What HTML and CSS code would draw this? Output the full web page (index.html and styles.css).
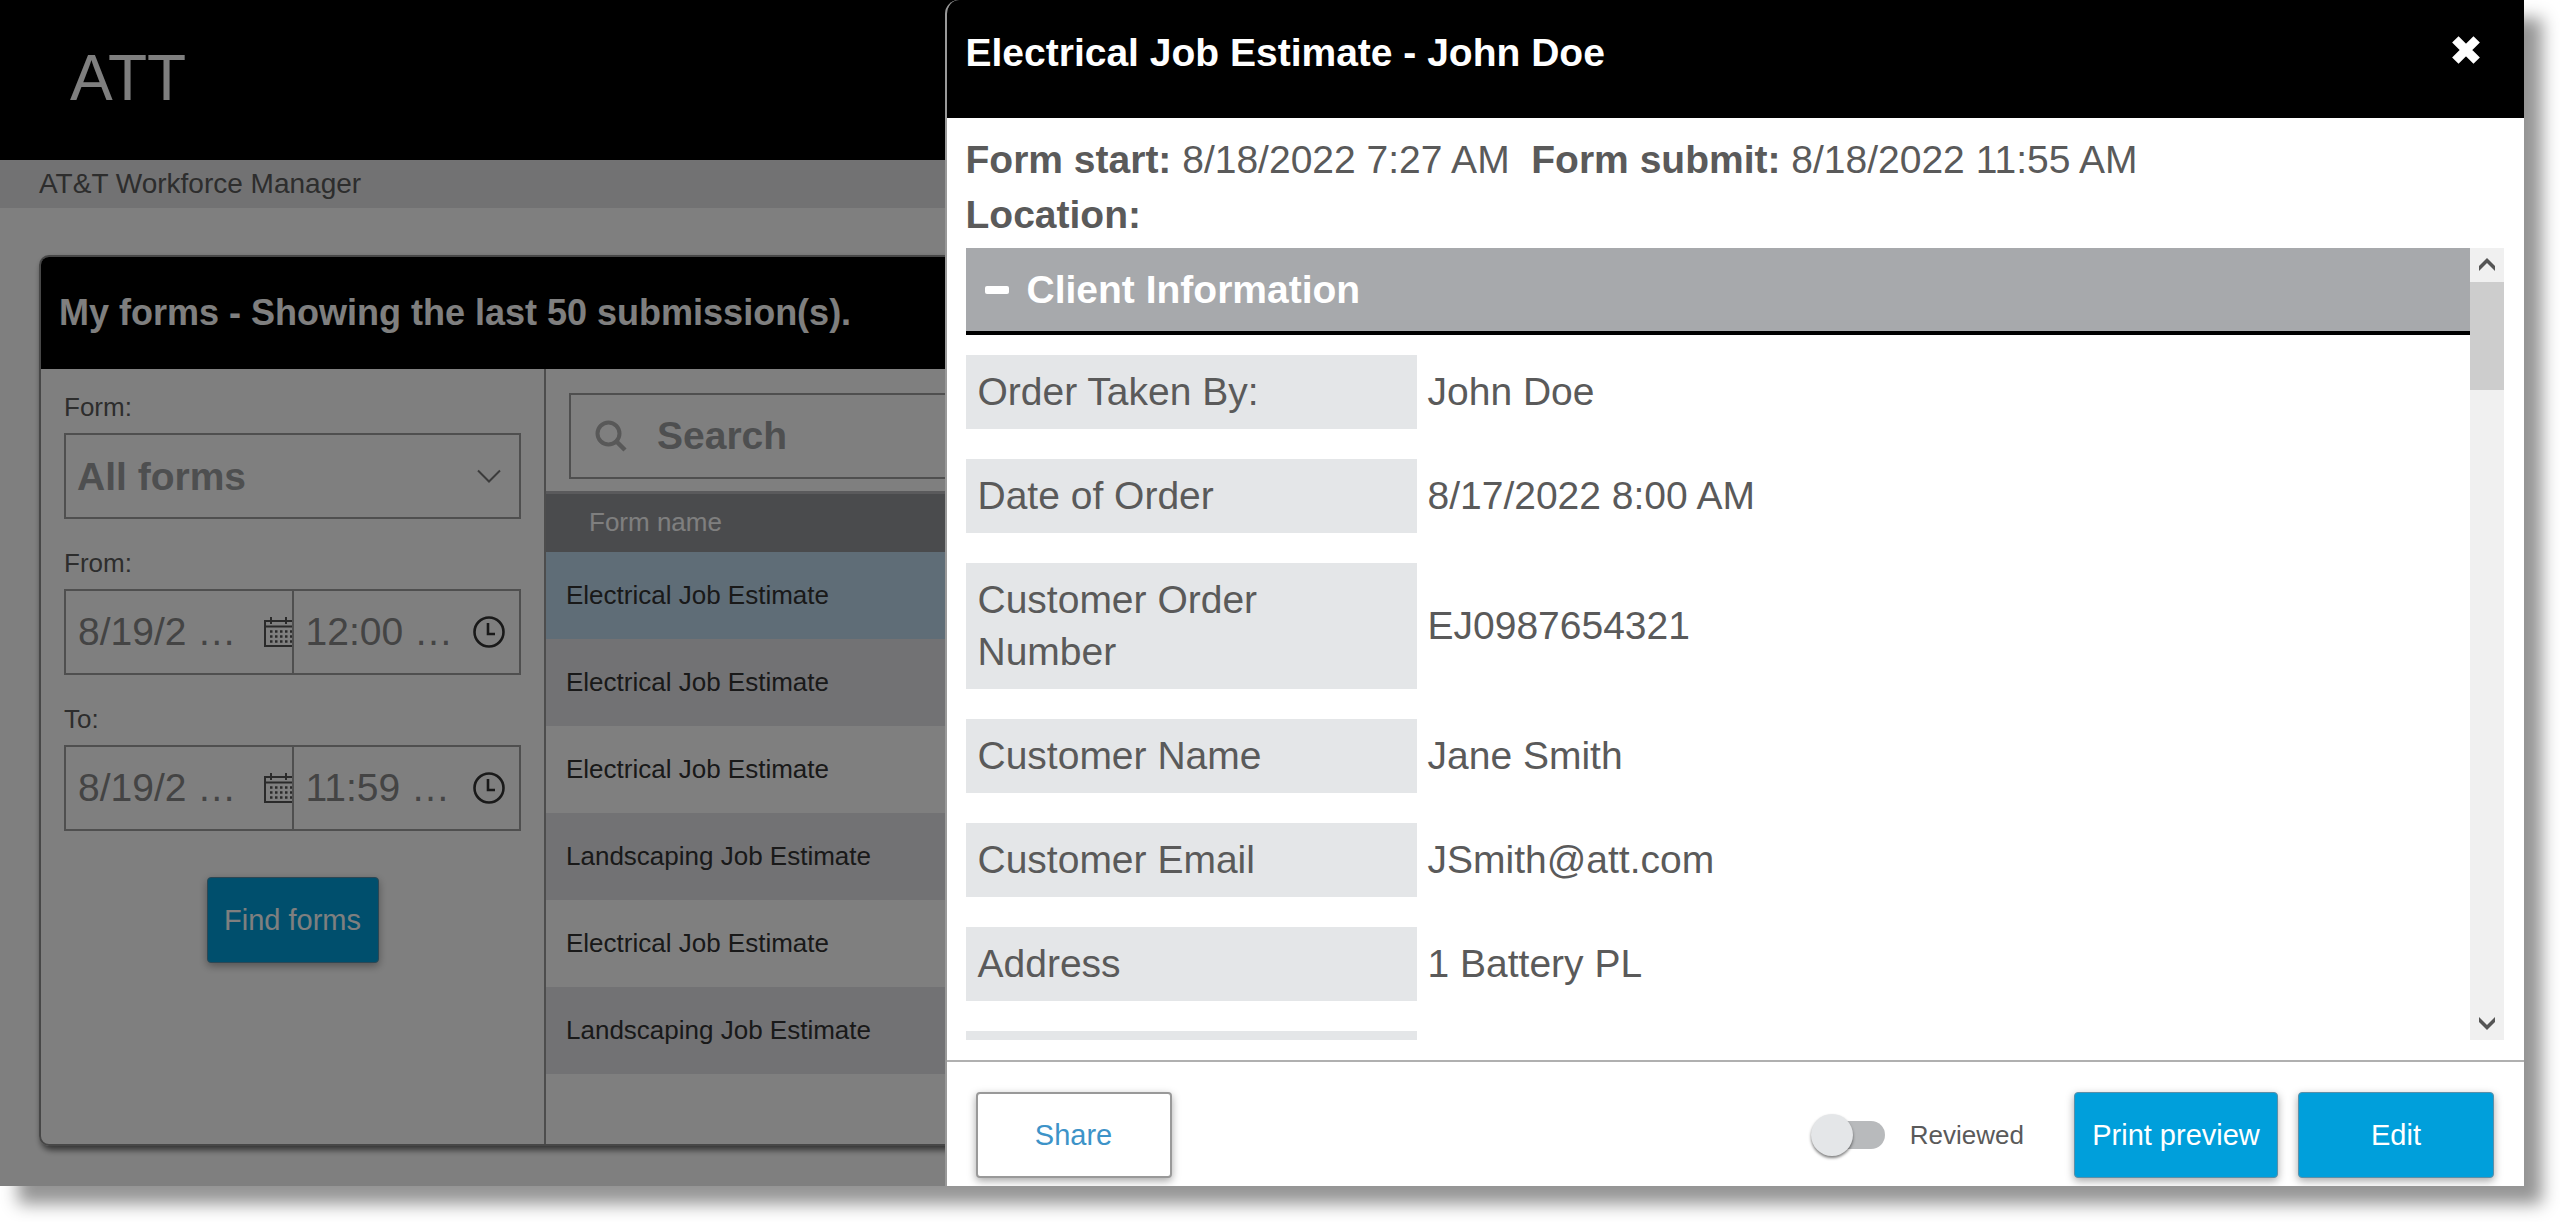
FILE: index.html
```html
<!DOCTYPE html>
<html lang="en">
<head>
<meta charset="utf-8">
<title>AT&amp;T Workforce Manager</title>
<link rel="stylesheet" href="styles.css">
</head>
<body>
<div class="window">
  <div class="page">
    <header class="brand">ATT</header>
    <nav class="product">AT&amp;T Workforce Manager</nav>
    <main class="card">
      <h1 class="card-title">My forms - Showing the last 50 submission(s).</h1>
      <div class="card-body">
        <form class="filters">
          <label for="form">Form:</label>
          <div class="control">
            <select id="form"><option>All forms</option></select>
            <svg class="chevron" viewBox="0 0 24 14"><path d="M1 1.500l11 11 11-11" fill="none" stroke="currentColor" stroke-width="2"/></svg>
          </div>
          <label for="from-date">From:</label>
          <div class="control">
            <div class="part">
              <input id="from-date" type="text" value="8/19/2 …">
              <svg class="calendar" viewBox="0 0 28 30"><path d="M28 4H1v25h27M1 9.500h27M7 0v7M22 0v7" fill="none" stroke="currentColor" stroke-width="2"/><path d="M6 14.500h22M6 19.500h22M6 24.500h22" stroke="currentColor" stroke-width="2.500" stroke-dasharray="2.500 2.500"/></svg>
            </div>
            <div class="part">
              <input type="text" aria-label="From time" value="12:00 …">
              <svg class="clock" viewBox="0 0 32 32"><circle cx="16" cy="16" r="14.500" fill="none" stroke="currentColor" stroke-width="2.600"/><path d="M15 7v11h7" fill="none" stroke="currentColor" stroke-width="2.600"/></svg>
            </div>
          </div>
          <label for="to-date">To:</label>
          <div class="control">
            <div class="part">
              <input id="to-date" type="text" value="8/19/2 …">
              <svg class="calendar" viewBox="0 0 28 30"><path d="M28 4H1v25h27M1 9.500h27M7 0v7M22 0v7" fill="none" stroke="currentColor" stroke-width="2"/><path d="M6 14.500h22M6 19.500h22M6 24.500h22" stroke="currentColor" stroke-width="2.500" stroke-dasharray="2.500 2.500"/></svg>
            </div>
            <div class="part">
              <input type="text" aria-label="To time" value="11:59 …">
              <svg class="clock" viewBox="0 0 32 32"><circle cx="16" cy="16" r="14.500" fill="none" stroke="currentColor" stroke-width="2.600"/><path d="M15 7v11h7" fill="none" stroke="currentColor" stroke-width="2.600"/></svg>
            </div>
          </div>
          <button type="button" class="button find">Find forms</button>
        </form>
        <section class="results">
          <div class="search">
            <svg class="glass" viewBox="0 0 32 32"><circle cx="13.500" cy="13.500" r="11" fill="none" stroke="currentColor" stroke-width="4"/><path d="M21.500 21.500l8.500 8.500" stroke="currentColor" stroke-width="4.500"/></svg>
            <input type="search" aria-label="Search" placeholder="Search">
          </div>
          <table class="grid">
            <thead><tr><th>Form name</th></tr></thead>
            <tbody>
              <tr class="selected"><td>Electrical Job Estimate</td></tr>
              <tr><td>Electrical Job Estimate</td></tr>
              <tr><td>Electrical Job Estimate</td></tr>
              <tr><td>Landscaping Job Estimate</td></tr>
              <tr><td>Electrical Job Estimate</td></tr>
              <tr><td>Landscaping Job Estimate</td></tr>
            </tbody>
          </table>
        </section>
      </div>
    </main>
  </div>
  <div class="overlay"></div>
  <section class="dialog" role="dialog" aria-labelledby="dialog-title">
    <header class="dialog-head">
      <h2 id="dialog-title">Electrical Job Estimate - John Doe</h2>
      <button type="button" class="close" aria-label="Close"><svg viewBox="0 0 30 30"><path d="M5 5l20 20M25 5L5 25" stroke="currentColor" stroke-width="8.500"/></svg></button>
    </header>
    <div class="summary">
      <p><b>Form start:</b> 8/18/2022 7:27 AM&nbsp; <b>Form submit:</b> 8/18/2022 11:55 AM</p>
      <p><b>Location:</b></p>
    </div>
    <div class="scroll">
      <div class="content">
        <h3 class="section"><svg viewBox="0 0 24 8"><rect width="24" height="8" rx="2" fill="currentColor"/></svg>Client Information</h3>
        <dl class="fields">
          <dt>Order Taken By:</dt><dd>John Doe</dd>
          <dt>Date of Order</dt><dd>8/17/2022 8:00 AM</dd>
          <dt>Customer Order Number</dt><dd>EJ0987654321</dd>
          <dt>Customer Name</dt><dd>Jane Smith</dd>
          <dt>Customer Email</dt><dd>JSmith@att.com</dd>
          <dt>Address</dt><dd>1 Battery PL</dd>
          <dt class="next"></dt><dd></dd>
        </dl>
      </div>
      <div class="scrollbar">
        <svg viewBox="0 0 34 34"><path d="M9 18l8-8 8 8v5l-8-8-8 8z" fill="#555"/></svg>
        <div class="thumb"></div>
        <svg viewBox="0 0 34 34"><path d="M9 16l8 8 8-8v-5l-8 8-8-8z" fill="#555"/></svg>
      </div>
    </div>
    <footer class="dialog-foot">
      <button type="button" class="button share">Share</button>
      <label class="toggle"><input type="checkbox"><span>Reviewed</span></label>
      <button type="button" class="button print">Print preview</button>
      <button type="button" class="button">Edit</button>
    </footer>
  </section>
</div>
</body>
</html>
```
FILE: styles.css
```css
* { box-sizing: border-box; }
body {
  margin: 0;
  background: #fff;
  color: #5a5a5a;
  font-family: "Liberation Sans", Arial, sans-serif;
  font-size: 26px;
  overflow: hidden;
}
h1, h2, h3, p, dl, dd { margin: 0; }
svg { display: block; flex: none; }
input, select, button { font: inherit; color: inherit; border: 0; background: none; border-radius: 0; }

.window {
  position: relative;
  margin: 0 36px 36px 0;
  height: calc(100vh - 36px);
  background: #fff;
  box-shadow: 18px 18px 16px rgba(0, 0, 0, .42);
}
.page { display: flex; flex-direction: column; height: 100%; }
.brand {
  background: #000;
  color: #fff;
  font-size: 64px;
  line-height: 156px;
  height: 160px;
  padding-left: 70px;
}
.product {
  background: #e4e4e6;
  font-size: 28px;
  line-height: 48px;
  padding: 0 39px;
}
.card {
  flex: 1;
  display: flex;
  flex-direction: column;
  margin: 47px 39px 40px;
  border: 2px solid #8e8e8e;
  border-radius: 10px;
  overflow: hidden;
  box-shadow: 2px 4px 6px rgba(0, 0, 0, .6);
}
.card-title {
  background: #000;
  color: #fff;
  font-size: 36px;
  line-height: 112px;
  padding-left: 18px;
}
.card-body { flex: 1; display: flex; }
.filters {
  width: 505px;
  flex: none;
  display: flex;
  flex-direction: column;
  padding: 13px 23px;
  border-right: 2px solid #9a9a9a;
}
.filters label { line-height: 50px; margin-bottom: 1px; }
.control {
  position: relative;
  display: flex;
  height: 86px;
  margin-bottom: 19px;
  border: 2px solid #9e9e9e;
}
.control select {
  width: 100%;
  appearance: none;
  padding: 0 11px;
  font-size: 39px;
  font-weight: bold;
  color: #9c9ea0;
}
.chevron { position: absolute; right: 18px; top: 34px; width: 24px; color: #777; }
.part { flex: 1; min-width: 0; display: flex; align-items: center; overflow: hidden; }
.part + .part { border-left: 2px solid #9e9e9e; }
.part input {
  flex: 1;
  min-width: 0;
  height: 100%;
  padding: 0 0 0 12px;
  font-size: 39px;
  color: #888;
}
.calendar { width: 28px; color: #555; }
.clock { width: 32px; margin-right: 14px; color: #333; }
.button {
  height: 86px;
  min-width: 196px;
  background: #009fdb;
  color: #fff;
  font-size: 29px;
  border: 1px solid #5b8fa8;
  border-radius: 4px;
  box-shadow: 0 3px 8px rgba(0, 0, 0, .35);
}
.find { align-self: center; width: 172px; min-width: 0; padding: 0; margin-top: 27px; }
.results { flex: 1; }
.search {
  display: flex;
  align-items: center;
  gap: 30px;
  height: 86px;
  margin: 24px 23px 12px;
  padding-left: 24px;
  border: 2px solid #9e9e9e;
}
.glass { width: 32px; color: #b0b0b0; }
.search input { flex: 1; padding: 0; font-size: 39px; font-weight: bold; }
.search input::placeholder { color: #9c9ea0; }
.grid { width: 100%; border-collapse: collapse; border-top: 3px solid #b5b5b8; }
.grid th {
  height: 59px;
  padding: 0 0 0 43px;
  background: #94969a;
  color: #fff;
  font-weight: normal;
  text-align: left;
}
.grid td { height: 87px; padding: 0 0 0 20px; color: #333; }
.grid tbody tr:nth-child(even) { background: #e4e4e8; }
.grid .selected { background: #bedaef; }

.overlay { position: absolute; inset: 0; background: rgba(0, 0, 0, .5); }

.dialog {
  position: absolute;
  top: 0;
  right: 0;
  bottom: 0;
  left: calc(37.500% - 2px);
  display: flex;
  flex-direction: column;
  background: #fff;
  border-left: 2px solid #999;
  border-top-left-radius: 14px;
  overflow: hidden;
  font-size: 39px;
}
.dialog-head {
  display: flex;
  justify-content: space-between;
  align-items: flex-start;
  height: 118px;
  padding: 30px 42px 0 19px;
  background: #000;
  color: #fff;
}
.dialog-head h2 { font-size: 39px; line-height: 46px; }
.close { padding: 4px 0; }
.close svg { width: 32px; }
.summary { padding: 14px 19px 6px; line-height: 55px; }
.scroll { flex: 1; min-height: 0; display: flex; margin: 0 20px 20px 19px; }
.content { flex: 1; overflow: hidden; }
.section {
  display: flex;
  align-items: center;
  gap: 18px;
  height: 87px;
  padding-left: 19px;
  background: #a7a9ac;
  border-bottom: 4px solid #000;
  color: #fff;
  font-size: 39px;
}
.section svg { width: 24px; }
.fields {
  display: grid;
  grid-template-columns: 451px 1fr;
  gap: 30px 0;
  padding-top: 20px;
  line-height: 52px;
}
.fields dt { background: #e4e6e8; padding: 11px 12px; }
.fields dd { align-self: center; padding-left: 11px; }
.fields .next { height: 74px; }
.scrollbar {
  display: flex;
  flex-direction: column;
  width: 34px;
  background: #f0f0f0;
}
.thumb { flex: none; height: 108px; margin-bottom: auto; background: #cdcdcd; }
.dialog-foot {
  display: flex;
  align-items: center;
  gap: 20px;
  padding: 30px 30px 8px 29px;
  border-top: 2px solid #b0b0b0;
}
.share { background: #fff; color: #3d93c8; border: 2px solid #999; margin-right: auto; }
.print { width: 204px; padding: 0; }
.toggle { display: flex; align-items: center; gap: 25px; margin-right: 30px; font-size: 26px; }
.toggle input {
  appearance: none;
  position: relative;
  width: 74px;
  height: 42px;
  margin: 0;
}
.toggle input::before {
  content: "";
  position: absolute;
  inset: 7px 0 7px 6px;
  border-radius: 14px;
  background: #b8babc;
}
.toggle input::after {
  content: "";
  position: absolute;
  inset: 0 auto 0 0;
  width: 42px;
  border-radius: 50%;
  background: #e4e6e8;
  box-shadow: 0 2px 3px rgba(0, 0, 0, .5);
}
```
